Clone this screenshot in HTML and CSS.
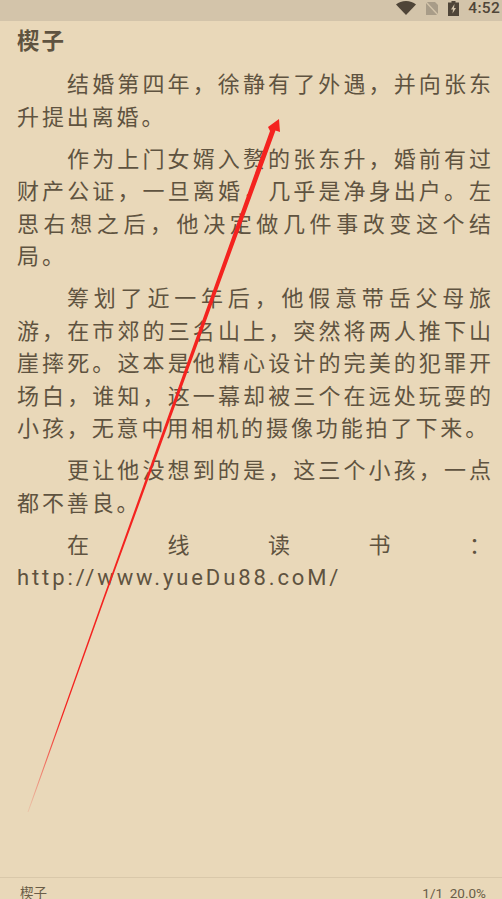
FILE: index.html
```html
<!DOCTYPE html>
<html lang="zh">
<head>
<meta charset="utf-8">
<title>楔子</title>
<link rel="stylesheet" href="styles.css">
</head>
<body>
<div class="phone">
  <header class="status">
    <svg class="ic-wifi" viewBox="0 0 20 14"><path d="M0 3.600C2.600 1.300 6.100 0 10 0s7.400 1.300 10 3.600L10 14z"/></svg>
    <svg class="ic-sim" viewBox="0 0 14 15"><path class="sim-body" d="M1 1h9l3 3v10H1z"/><path class="sim-cross" d="M0 0l14 15"/></svg>
    <svg class="ic-bat" viewBox="0 0 11 15"><path d="M3.500 0h4v1.500H11V15H0V1.500h3.500z"/><path class="bolt" d="M6.500 3L3 8.500h2L4.500 12.500 8 7H6z"/></svg>
    <span class="time">4:52</span>
  </header>
  <main class="content">
    <h1 class="title">楔子</h1>
    <p class="para">结婚第四年，徐静有了外遇，并向张东升提出离婚。</p>
    <p class="para">作为上门女婿入赘的张东升，婚前有过财产公证，一旦离婚，几乎是净身出户。左思右想之后，他决定做几件事改变这个结局。</p>
    <p class="para">筹划了近一年后，他假意带岳父母旅游，在市郊的三名山上，突然将两人推下山崖摔死。这本是他精心设计的完美的犯罪开场白，谁知，这一幕却被三个在远处玩耍的小孩，无意中用相机的摄像功能拍了下来。</p>
    <p class="para">更让他没想到的是，这三个小孩，一点都不善良。</p>
    <p class="para">在线读书：http://www.yueDu88.coM/</p>
  </main>
  <footer class="foot">
    <span>楔子</span>
    <span class="prog">1/1&nbsp;&nbsp;20.0%</span>
  </footer>
  <svg class="arrow" viewBox="0 0 502 899">
    <defs>
      <linearGradient id="fade" gradientUnits="userSpaceOnUse" x1="28" y1="812" x2="62" y2="716">
        <stop offset="0" stop-color="#f4231f" stop-opacity="0.100"/>
        <stop offset="1" stop-color="#f4231f"/>
      </linearGradient>
    </defs>
    <path fill="url(#fade)" d="M27.500 812L102.500 600L270 131L268 127L279 119L280 132L275.500 130.500L104.200 600L28.500 812Z"/>
  </svg>
</div>
</body>
</html>
```
FILE: styles.css
```css
html, body {
  margin: 0;
  padding: 0;
}
.phone {
  position: relative;
  width: 502px;
  height: 899px;
  overflow: hidden;
  display: flex;
  flex-direction: column;
  background: #e9d8b9;
  color: #5f5340;
  font-family: Roboto, "Noto Sans CJK SC", sans-serif;
}
.status {
  flex: none;
  height: 21px;
  background: #d3c4aa;
  display: flex;
  align-items: flex-start;
  justify-content: flex-end;
  padding-right: 2px;
  box-sizing: border-box;
}
.status svg { display: block; margin-top: 1px; }
.ic-wifi { width: 20px; height: 14px; fill: #4f4538; margin-right: 9px; }
.ic-sim { width: 14px; height: 15px; margin-right: 9px; }
.sim-body { fill: #a89c88; }
.sim-cross { stroke: #d3c4aa; stroke-width: 1.500; fill: none; }
.ic-bat { width: 11px; height: 15px; fill: #4f4538; margin-right: 9px; }
.bolt { fill: #d3c4aa; }
.time {
  font: 500 15.500px/17px Roboto, sans-serif;
  color: #4f4538;
  letter-spacing: 0.300px;
}
.content {
  flex: 1;
  min-height: 0;
  padding: 3px 8px 0 17px;
}
.title {
  margin: 0 0 11px;
  font-size: 22.500px;
  font-weight: 700;
  line-height: 34px;
  letter-spacing: 2px;
}
.para {
  margin: 0 0 9.500px;
  font-size: 22px;
  line-height: 32.500px;
  letter-spacing: 2.900px;
  text-indent: 50px;
  text-align: justify;
  word-break: break-word;
}
.foot {
  flex: none;
  height: 22px;
  border-top: 1px solid #d9c8aa;
  padding: 5px 16px 0 20px;
  box-sizing: border-box;
  display: flex;
  justify-content: space-between;
  font-size: 13.500px;
  line-height: 20px;
  color: #6a5d48;
}
.arrow {
  position: absolute;
  left: 0;
  top: 0;
  width: 502px;
  height: 899px;
  pointer-events: none;
}
```
